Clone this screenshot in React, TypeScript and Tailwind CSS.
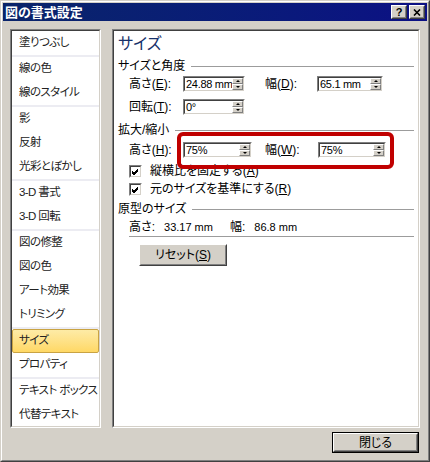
import type { ReactNode } from "react";

const listGroups: string[][] = [
  ["塗りつぶし"],
  ["線の色", "線のスタイル"],
  ["影", "反射", "光彩とぼかし"],
  ["3-D 書式", "3-D 回転"],
  ["図の修整", "図の色", "アート効果", "トリミング"],
  ["サイズ", "プロパティ"],
  ["テキスト ボックス", "代替テキスト"],
];

const Sunken = ({ className, children }: { className: string; children: ReactNode }) => (
  <div className={`border border-t-[#808080] border-l-[#808080] border-b-white border-r-white ${className}`}>
    <div className="w-full h-full border border-t-[#404040] border-l-[#404040] border-b-[#d4d0c8] border-r-[#d4d0c8] bg-white">
      {children}
    </div>
  </div>
);

const Arrow = ({ up }: { up: boolean }) => (
  <div
    className={
      up
        ? "w-0 h-0 border-x-[2px] border-x-transparent border-b-[2px] border-b-black"
        : "w-0 h-0 border-x-[2px] border-x-transparent border-t-[2px] border-t-black"
    }
  />
);

const Spinner = () => (
  <div className="w-[11px] h-full flex flex-col">
    <div className="flex-1 bg-[#d4d0c8] border border-t-white border-l-white border-b-[#808080] border-r-[#808080] flex items-center justify-center">
      <Arrow up />
    </div>
    <div className="flex-1 bg-[#d4d0c8] border border-t-white border-l-white border-b-[#808080] border-r-[#808080] flex items-center justify-center">
      <Arrow up={false} />
    </div>
  </div>
);

const NumBox = ({ value, width }: { value: string; width: string }) => (
  <Sunken className={`${width} h-[16px]`}>
    <div className="flex h-full">
      <div className="flex-1 overflow-hidden whitespace-nowrap pl-[1px] text-[11px] leading-[12px] tracking-[-0.3px] text-black font-['Liberation_Sans',sans-serif]">
        {value}
      </div>
      <Spinner />
    </div>
  </Sunken>
);

const Check = ({ children }: { children: ReactNode }) => (
  <div className="h-[18px] flex items-center">
    <Sunken className="w-[13px] h-[13px]">
      <svg width="9" height="9" viewBox="0 0 9 9" className="block">
        <path d="M1 4 L3 6 L7 2 M1 5 L3 7 L7 3 M1 6 L3 8 L7 4" stroke="#000" strokeWidth="1" fill="none" />
      </svg>
    </Sunken>
    <span className="ml-[8px] whitespace-nowrap">{children}</span>
  </div>
);

const Header = ({ label }: { label: string }) => (
  <div className="h-[18px] flex items-center pr-[4px]">
    <span className="whitespace-nowrap">{label}</span>
    <div className="flex-1 h-px bg-[#9c9c9c] ml-[6px]" />
  </div>
);

const Raised = ({ className, children }: { className: string; children: ReactNode }) => (
  <div className={`bg-[#d4d0c8] border border-t-white border-l-white border-b-[#404040] border-r-[#404040] ${className}`}>
    <div className="w-full h-full border border-t-[#d4d0c8] border-l-[#d4d0c8] border-b-[#808080] border-r-[#808080] flex items-center justify-center whitespace-nowrap">
      {children}
    </div>
  </div>
);

export default function App() {
  return (
    <div className="w-[430px] h-[462px] bg-[#d4d0c8] border border-t-[#d4d0c8] border-l-[#d4d0c8] border-b-[#404040] border-r-[#404040] text-[12px] text-black font-['Liberation_Sans','Noto_Sans_CJK_JP',sans-serif] [font-feature-settings:'palt']">
      <div className="w-full h-full border border-t-white border-l-white border-b-[#808080] border-r-[#808080] p-[1px] flex flex-col">
        <div className="h-[18px] flex items-center bg-gradient-to-r from-[#0a246a] to-[#0c1084] pl-[2px] pr-[2px]">
          <span className="text-white font-bold text-[13px] leading-none">図の書式設定</span>
          <div className="flex-1" />
          <Raised className="w-[16px] h-[14px]">
            <span className="text-[11px] font-bold leading-none">?</span>
          </Raised>
          <Raised className="w-[16px] h-[14px] ml-[2px]">
            <svg width="8" height="7" viewBox="0 0 8 7">
              <path d="M1 0.5 L7 6.5 M7 0.5 L1 6.5" stroke="#000" strokeWidth="1.6" />
            </svg>
          </Raised>
        </div>

        <div className="flex pt-[8px] pl-[7px]">
          <Sunken className="w-[91px] h-[399px]">
            <div className="h-full overflow-hidden text-[#222] text-[11.5px] tracking-[-0.6px]">
              {listGroups.map((group, gi) => (
                <div key={gi}>
                  {gi > 0 && <div className="h-[2px] bg-[#ececf2]" />}
                  {group.map((item) =>
                    item === "サイズ" ? (
                      <div
                        key={item}
                        className="h-[24px] flex items-center px-[6px] whitespace-nowrap rounded-[2px] border border-[#c9a343] bg-gradient-to-b from-[#fdeba6] to-[#ffd864]"
                      >
                        {item}
                      </div>
                    ) : (
                      <div key={item} className="h-[24px] flex items-center pl-[7px] whitespace-nowrap">
                        {item}
                      </div>
                    )
                  )}
                </div>
              ))}
            </div>
          </Sunken>

          <Sunken className="w-[308px] h-[399px] ml-[11px]">
            <div className="relative h-full pl-[4px]">
              <div className="h-[26px] flex items-center text-[16px] text-[#16306a]">サイズ</div>
              <Header label="サイズと角度" />

              <div className="pl-[11px]">
                <div className="mt-[1px] h-[16px] flex items-center">
                  <span className="w-[54px] whitespace-nowrap">高さ(<u>E</u>):</span>
                  <NumBox value="24.88 mm" width="w-[62px]" />
                  <span className="ml-[20px] w-[52px] whitespace-nowrap">幅(<u>D</u>):</span>
                  <NumBox value="65.1 mm" width="w-[66px]" />
                </div>
                <div className="mt-[7px] h-[16px] flex items-center">
                  <span className="w-[54px] whitespace-nowrap">回転(<u>T</u>):</span>
                  <NumBox value="0°" width="w-[62px]" />
                </div>
              </div>

              <div className="mt-[6px]">
                <Header label="拡大/縮小" />
              </div>

              <div className="pl-[11px]">
                <div className="mt-[3px] h-[16px] flex items-center">
                  <span className="w-[54px] whitespace-nowrap">高さ(<u>H</u>):</span>
                  <NumBox value="75%" width="w-[69px]" />
                  <span className="ml-[13px] w-[53px] whitespace-nowrap">幅(<u>W</u>):</span>
                  <NumBox value="75%" width="w-[68px]" />
                </div>
                <div className="mt-[4px]">
                  <Check>縦横比を固定する(<u>A</u>)</Check>
                  <Check>元のサイズを基準にする(<u>R</u>)</Check>
                </div>
              </div>

              <div className="mt-[2px]">
                <Header label="原型のサイズ" />
              </div>

              <div className="pl-[11px] pr-[4px]">
                <div className="h-[18px] flex items-center whitespace-nowrap">
                  <span>高さ:</span>
                  <span className="ml-[9px] text-[11px]">33.17 mm</span>
                  <span className="ml-[17px]">幅:</span>
                  <span className="ml-[9px] text-[11px]">86.8 mm</span>
                </div>
                <div className="h-px bg-[#9c9c9c]" />
                <Raised className="w-[88px] h-[22px] mt-[7px] ml-[10px]">
                  <span>リセット(<u>S</u>)</span>
                </Raised>
              </div>

              <div className="absolute left-[63px] top-[101px] w-[217px] h-[37px] border-[4px] border-[#c00000] rounded-[6px]" />
            </div>
          </Sunken>
        </div>

        <div className="flex justify-end pr-[8px] mt-[4px]">
          <div className="w-[87px] h-[21px] border border-black">
            <Raised className="w-full h-full">
              <span>閉じる</span>
            </Raised>
          </div>
        </div>
      </div>
    </div>
  );
}
